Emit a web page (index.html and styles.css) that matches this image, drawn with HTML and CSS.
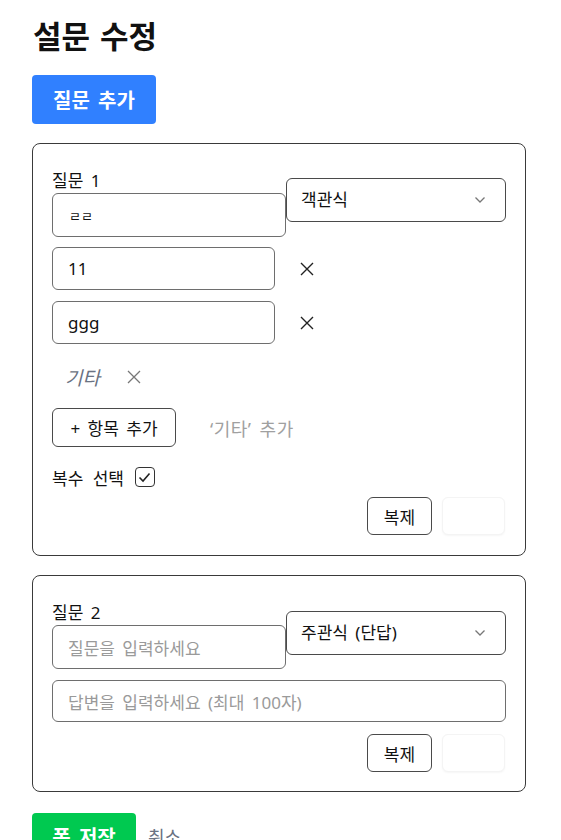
FILE: index.html
```html
<!DOCTYPE html>
<html lang="ko">
<head>
<meta charset="utf-8">
<title>설문 수정</title>
<link rel="stylesheet" href="styles.css">
</head>
<body>
<div class="page">
  <h1 class="title">설문 수정</h1>
  <button class="btn-primary">질문 추가</button>

  <section class="card card-one">
    <div class="q-head">
      <div class="q-left">
        <label class="q-label">질문 1</label>
        <div class="field q-input"><span class="val small">ㄹㄹ</span></div>
      </div>
      <div class="field select"><span>객관식</span>
        <svg class="chev" width="12" height="8" viewBox="0 0 12 8"><path d="M1.5 1.5 L6 6 L10.5 1.5" fill="none" stroke="#777" stroke-width="1.3"/></svg>
      </div>
    </div>

    <div class="opt-row first">
      <div class="field opt-input"><span class="val">11</span></div>
      <svg class="xicon" width="14" height="14" viewBox="0 0 14 14"><path d="M1 1 L13 13 M13 1 L1 13" stroke="#222" stroke-width="1.4"/></svg>
    </div>
    <div class="opt-row">
      <div class="field opt-input"><span class="val">ggg</span></div>
      <svg class="xicon" width="14" height="14" viewBox="0 0 14 14"><path d="M1 1 L13 13 M13 1 L1 13" stroke="#222" stroke-width="1.4"/></svg>
    </div>

    <div class="etc-row">
      <span class="etc">기타</span>
      <svg class="xicon-gray" width="14" height="14" viewBox="0 0 14 14"><path d="M1 1 L13 13 M13 1 L1 13" stroke="#777" stroke-width="1.3"/></svg>
    </div>

    <div class="add-row">
      <button class="btn-outline add-btn">+ 항목 추가</button>
      <span class="add-etc">‘기타’ 추가</span>
    </div>

    <div class="multi-row">
      <span>복수 선택</span>
      <span class="checkbox">
        <svg width="13" height="11" viewBox="0 0 13 11"><path d="M1.5 5.5 L5 9 L11.5 1.5" fill="none" stroke="#222" stroke-width="1.6"/></svg>
      </span>
    </div>

    <div class="actions">
      <button class="btn-outline copy-btn">복제</button>
      <button class="btn-blank"></button>
    </div>
  </section>

  <section class="card card-two">
    <div class="q-head">
      <div class="q-left">
        <label class="q-label">질문 2</label>
        <div class="field q-input"><span class="ph">질문을 입력하세요</span></div>
      </div>
      <div class="field select select-two"><span>주관식 (단답)</span>
        <svg class="chev" width="12" height="8" viewBox="0 0 12 8"><path d="M1.5 1.5 L6 6 L10.5 1.5" fill="none" stroke="#777" stroke-width="1.3"/></svg>
      </div>
    </div>
    <div class="field answer"><span class="ph">답변을 입력하세요 (최대 100자)</span></div>
    <div class="actions actions-two">
      <button class="btn-outline copy-btn">복제</button>
      <button class="btn-blank"></button>
    </div>
  </section>

  <div class="footer">
    <button class="btn-save">폼 저장</button>
    <span class="cancel">취소</span>
  </div>
</div>
</body>
</html>
```

FILE: styles.css
```css
* { box-sizing: border-box; }
html, body { margin: 0; padding: 0; background: #fff; }
body {
  font-family: "Noto Sans", "Noto Sans CJK KR", sans-serif;
  color: #111;
  font-size: 17px;
  word-spacing: 3px;
  overflow: hidden;
  height: 840px;
}
.page {
  width: 494px;
  margin-left: 32px;
  padding-top: 18px;
}
.title {
  font-size: 31px;
  line-height: 36px;
  font-weight: 700;
  margin: 0 0 21px 1px;
  word-spacing: 2px;
}
button { font-family: inherit; cursor: pointer; word-spacing: inherit; }
.btn-primary {
  display: block;
  width: 124px;
  height: 49px;
  background: #3080ff;
  color: #fff;
  border: none;
  border-radius: 4px;
  font-size: 20px;
  font-weight: 700;
  margin-bottom: 19px;
  padding: 0;
}
.card {
  border: 1px solid #3a3a3a;
  border-radius: 8px;
  padding: 25px 19px 20px 19px;
}
.card-two { margin-top: 19px; padding-bottom: 19px; }
.q-head { display: flex; align-items: flex-start; }
.q-left { width: 234px; display: flex; flex-direction: column; }
.q-label { font-size: 17px; line-height: 24px; height: 24px; }
.field {
  border: 1px solid #6e6e6e;
  border-radius: 6px;
  display: flex;
  align-items: center;
  font-size: 17px;
}
.q-input { height: 44px; padding-left: 15px; }
.val { color: #111; }
.val.small { font-size: 13px; padding-left: 1px; }
.ph { color: #9a9a9a; }
.select {
  width: 220px;
  height: 44px;
  margin-top: 9px;
  padding: 0 19px 0 14px;
  justify-content: space-between;
  align-items: flex-start;
  padding-top: 7px;
  border-color: #4a4a4a;
}
.select-two { margin-top: 10px; }
.chev { margin-top: 10px; }
.opt-row { display: flex; align-items: center; margin-top: 11px; }
.opt-row.first { margin-top: 10px; }
.opt-input { width: 223px; height: 43px; padding-left: 15px; }
.xicon { margin-left: 25px; }
.etc-row {
  display: flex;
  align-items: center;
  height: 22px;
  margin-top: 22px;
  padding-left: 13px;
}
.etc { font-style: italic; color: #6a7282; font-size: 19px; }
.xicon-gray { margin-left: 27px; }
.add-row { display: flex; align-items: center; margin-top: 20px; }
.btn-outline {
  background: #fff;
  border: 1px solid #4a4a4a;
  border-radius: 6px;
  color: #111;
  font-size: 17px;
  padding: 0;
}
.add-btn { width: 124px; height: 39px; }
.add-etc { margin-left: 34px; color: #a0a0a0; font-size: 18px; letter-spacing: 0.5px; }
.multi-row {
  display: flex;
  align-items: center;
  height: 22px;
  margin-top: 19px;
  font-size: 17px;
  word-spacing: 5px;
}
.checkbox {
  width: 20px;
  height: 20px;
  margin-left: 11px;
  border: 1.5px solid #333;
  border-radius: 4px;
  display: flex;
  align-items: center;
  justify-content: center;
}
.actions {
  display: flex;
  justify-content: flex-end;
  gap: 10px;
  margin-top: 9px;
  padding-right: 1px;
}
.actions-two { margin-top: 12px; }
.copy-btn { width: 65px; height: 38px; }
.btn-blank {
  width: 63px;
  height: 38px;
  background: #fff;
  border: 1px solid #f4f4f4;
  border-radius: 6px;
  box-shadow: 0 1px 2px rgba(0,0,0,0.04);
}
.answer { margin-top: 11px; height: 42px; padding-left: 15px; }
.footer { display: flex; align-items: center; margin-top: 21px; }
.btn-save {
  width: 104px;
  height: 46px;
  background: #00c950;
  color: #fff;
  border: none;
  border-radius: 4px;
  font-size: 20px;
  font-weight: 700;
  padding: 0;
}
.cancel { margin-left: 12px; color: #6a7282; font-size: 18px; }
```
